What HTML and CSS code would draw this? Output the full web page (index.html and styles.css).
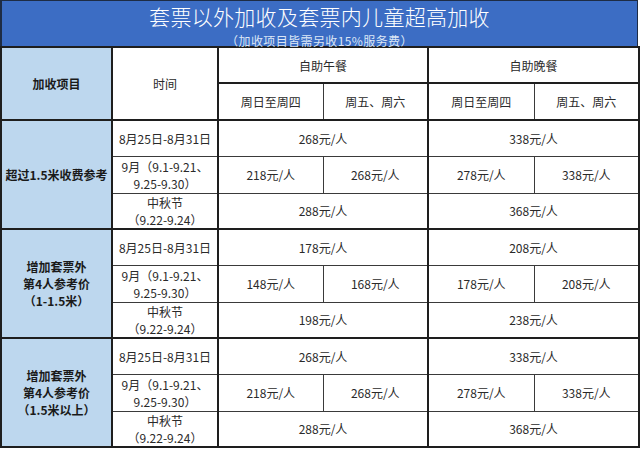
FILE: index.html
```html
<!DOCTYPE html>
<html lang="zh">
<head>
<meta charset="utf-8">
<link rel="stylesheet" href="styles.css">
</head>
<body>
<div class="sheet">
  <div class="banner">
    <div class="title">套票以外加收及套票内儿童超高加收</div>
    <div class="subtitle">（加收项目皆需另收15%服务费）</div>
  </div>
  <table class="grid">
    <colgroup>
      <col class="c1"><col class="c2"><col class="c3"><col class="c4"><col class="c5"><col class="c6">
    </colgroup>
    <tr class="h1">
      <td class="label" rowspan="2">加收项目</td>
      <td rowspan="2" class="time">时间</td>
      <td colspan="2" class="major">自助午餐</td>
      <td colspan="2" class="major">自助晚餐</td>
    </tr>
    <tr class="h2">
      <td>周日至周四</td>
      <td class="major">周五、周六</td>
      <td>周日至周四</td>
      <td>周五、周六</td>
    </tr>

    <tr class="r1 gs">
      <td class="label" rowspan="3">超过1.5米收费参考</td>
      <td class="time">8月25日-8月31日</td>
      <td colspan="2" class="major">268元/人</td>
      <td colspan="2" class="major">338元/人</td>
    </tr>
    <tr class="r2">
      <td class="time multi">9月（9.1-9.21、<br>9.25-9.30）</td>
      <td>218元/人</td>
      <td class="major">268元/人</td>
      <td>278元/人</td>
      <td>338元/人</td>
    </tr>
    <tr class="r3">
      <td class="time multi">中秋节<br>（9.22-9.24）</td>
      <td colspan="2" class="major">288元/人</td>
      <td colspan="2" class="major">368元/人</td>
    </tr>

    <tr class="r1 gs">
      <td class="label multi-label" rowspan="3">增加套票外<br>第4人参考价<br>（1-1.5米）</td>
      <td class="time">8月25日-8月31日</td>
      <td colspan="2" class="major">178元/人</td>
      <td colspan="2" class="major">208元/人</td>
    </tr>
    <tr class="r2">
      <td class="time multi">9月（9.1-9.21、<br>9.25-9.30）</td>
      <td>148元/人</td>
      <td class="major">168元/人</td>
      <td>178元/人</td>
      <td>208元/人</td>
    </tr>
    <tr class="r3">
      <td class="time multi">中秋节<br>（9.22-9.24）</td>
      <td colspan="2" class="major">198元/人</td>
      <td colspan="2" class="major">238元/人</td>
    </tr>

    <tr class="r1 gs">
      <td class="label multi-label" rowspan="3">增加套票外<br>第4人参考价<br>（1.5米以上）</td>
      <td class="time">8月25日-8月31日</td>
      <td colspan="2" class="major">268元/人</td>
      <td colspan="2" class="major">338元/人</td>
    </tr>
    <tr class="r2">
      <td class="time multi">9月（9.1-9.21、<br>9.25-9.30）</td>
      <td>218元/人</td>
      <td class="major">268元/人</td>
      <td>278元/人</td>
      <td>338元/人</td>
    </tr>
    <tr class="r3">
      <td class="time multi">中秋节<br>（9.22-9.24）</td>
      <td colspan="2" class="major">288元/人</td>
      <td colspan="2" class="major">368元/人</td>
    </tr>
  </table>
</div>
</body>
</html>
```

FILE: styles.css
```css
html, body {
  margin: 0;
  padding: 0;
  background: #ffffff;
}

body {
  font-family: "Noto Sans CJK SC", "Noto Sans", sans-serif;
  color: #2a2a2a;
}

.sheet {
  width: 638px;
}

.banner {
  height: 45px;
  background: #3c6dc4;
  border: 1px solid #1e2c44;
  border-bottom: none;
  border-left-width: 2px;
  border-top-width: 1px;
  display: flex;
  flex-direction: column;
  align-items: center;
  box-sizing: content-box;
}

.title {
  color: #ffffff;
  font-size: 21px;
  font-weight: 300;
  line-height: 27px;
  margin-top: 2px;
  letter-spacing: 0.3px;
}

.subtitle {
  color: #dbe6f6;
  font-size: 12px;
  line-height: 15px;
  margin-top: 3px;
  letter-spacing: 0.4px;
}

.grid {
  border-collapse: collapse;
  table-layout: fixed;
  width: 638px;
  border: 2px solid #1e1e1e;
}

.c1 { width: 111px; }
.c2 { width: 106px; }
.c3 { width: 105px; }
.c4 { width: 105px; }
.c5 { width: 106px; }
.c6 { width: 105px; }

.grid td {
  border: 1px solid #3a3a3a;
  text-align: center;
  vertical-align: middle;
  font-size: 12px;
  line-height: 17px;
  padding: 0;
  color: #2a2a2a;
}

.grid td.multi {
  line-height: 17px;
}

.grid td.label {
  background: #bdd7ee;
  font-weight: bold;
  color: #1a1a1a;
  border: 2px solid #1e1e1e;
}

.grid td.multi-label {
  line-height: 17px;
}

.grid td.time {
  border-left: 2px solid #1e1e1e;
  border-right: 2px solid #1e1e1e;
}

.grid td.major {
  border-right: 2px solid #1e1e1e;
}

.grid tr.gs td {
  border-top: 2px solid #1e1e1e;
}

.grid tr.h1 td {
  border-bottom: 2px solid #1e1e1e;
}

.h1 { height: 36px; }
.h2 { height: 37px; }
.r1 { height: 36px; }
.r2 { height: 37px; }
.r3 { height: 36px; }
```
